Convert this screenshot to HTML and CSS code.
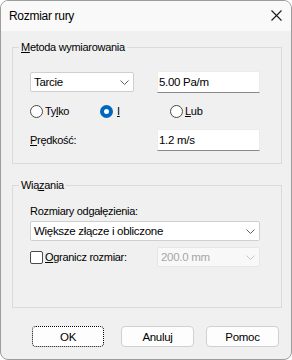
FILE: index.html
```html
<!DOCTYPE html>
<html lang="pl">

    <head>
        <meta charset="UTF-8">
        <meta name="viewport" content="width=device-width, initial-scale=1.0">
        <title>Rozmiar rury</title>

        <link rel="stylesheet" href="styles.css">
    </head>

    <body>

        <div class="window">
            <div class="titlebar">
                <span class="title">Rozmiar rury</span>
                <svg class="close" width="11" height="11" viewBox="0 0 11 11">
                    <path d="M0.5 0.5 L10.5 10.5 M10.5 0.5 L0.5 10.5" stroke="#1a1a1a" stroke-width="1.1" fill="none"/>
                </svg>
            </div>

            <div class="content">
                <fieldset class="group group-method">
                    <legend><u>M</u>etoda wymiarowania</legend>
                    <div class="group-body">
                        <div class="row row-top">
                            <div class="combo combo-short">
                                <span>Tarcie</span>
                                <svg class="chevron" width="9" height="5" viewBox="0 0 9 5">
                                    <path d="M0.5 0.5 L4.5 4.5 L8.5 0.5" stroke="#606060" fill="none"/>
                                </svg>
                            </div>
                            <div class="field">5.00 Pa/m</div>
                        </div>

                        <div class="radios">
                            <div class="radio"><span class="circle"></span><span>Ty<u>l</u>ko</span></div>
                            <div class="radio checked"><span class="circle"></span><span><u>I</u></span></div>
                            <div class="radio"><span class="circle"></span><span><u>L</u>ub</span></div>
                        </div>

                        <div class="row row-speed">
                            <span class="label"><u>P</u>rędkość:</span>
                            <div class="field">1.2 m/s</div>
                        </div>
                    </div>
                </fieldset>

                <fieldset class="group group-bind">
                    <legend>Wią<u>z</u>ania</legend>
                    <div class="group-body">
                        <div class="label branch-label">Rozmiary odgałęzienia:</div>
                        <div class="combo combo-wide">
                            <span>Większe złącze i obliczone</span>
                            <svg class="chevron" width="9" height="5" viewBox="0 0 9 5">
                                <path d="M0.5 0.5 L4.5 4.5 L8.5 0.5" stroke="#606060" fill="none"/>
                            </svg>
                        </div>
                        <div class="row row-limit">
                            <div class="check"><span class="box"></span><span><u>O</u>granicz rozmiar:</span></div>
                            <div class="combo combo-disabled">
                                <span>200.0 mm</span>
                                <svg class="chevron" width="9" height="5" viewBox="0 0 9 5">
                                    <path d="M0.5 0.5 L4.5 4.5 L8.5 0.5" stroke="#c4c4c4" fill="none"/>
                                </svg>
                            </div>
                        </div>
                    </div>
                </fieldset>

                <div class="buttons">
                    <button class="btn btn-ok">OK</button>
                    <button class="btn">Anuluj</button>
                    <button class="btn">Pomoc</button>
                </div>
            </div>
        </div>

    </body>

</html>
```

FILE: styles.css
```css
body {
    margin: 0;
    padding: 0;
    font-family: "Liberation Sans", Arial, sans-serif;
    font-size: 11px;
    letter-spacing: -0.3px;
    color: #000;
    background-color: #fff;
}

.window {
    width: 292px;
    height: 360px;
    box-sizing: border-box;
    border: 1px solid #9c9c9c;
    border-radius: 8px;
    background-color: #f0f0f0;
    overflow: hidden;
}

.titlebar {
    height: 30px;
    background-color: #f9f9f9;
    display: flex;
    align-items: center;
    justify-content: space-between;
    padding: 0 9px 0 8px;
}

.title {
    font-size: 12px;
}

.close {
    margin-top: -1px;
}

.content {
    padding: 10px 0 0 11px;
}

u {
    text-decoration-thickness: 1px;
    text-underline-offset: 1px;
}

/* group boxes */

.group {
    width: 270px;
    box-sizing: border-box;
    margin: 0;
    padding: 0 0 0 6px;
    border: 1px solid #dadada;
    min-width: 0;
}

.group legend {
    padding: 0 2px;
    line-height: 13px;
}

.group-body {
    padding-left: 11px;
}

.group-method .group-body {
    padding-top: 17px;
    padding-bottom: 12px;
}

.group-bind {
    margin-top: 15px;
}

.group-bind .group-body {
    padding-top: 13px;
    padding-bottom: 40px;
}

.row {
    display: grid;
    grid-template-columns: 127px 103px;
    align-items: center;
}

.row-top {
    height: 22px;
}

.row-speed {
    height: 22px;
    margin-top: 11px;
}

.label {
    line-height: 13px;
}

/* inputs */

.field {
    height: 22px;
    box-sizing: border-box;
    background-color: #fff;
    border: 1px solid #ececec;
    border-bottom-color: #8a8a8a;
    padding-left: 1px;
    display: flex;
    align-items: center;
    font-size: 11.5px;
}

.combo {
    height: 20px;
    box-sizing: border-box;
    background-color: #fff;
    border: 1px solid #cfcfcf;
    border-radius: 2px;
    display: flex;
    align-items: center;
    justify-content: space-between;
    padding: 0 4px 0 3px;
    font-size: 11.5px;
}

.combo-short {
    width: 104px;
}

.combo-wide {
    width: 230px;
    margin-top: 3px;
}

.combo-disabled {
    background-color: #f8f8f8;
    border-color: #e6e6e6;
    color: #a6a6a6;
}

/* radios and checkbox */

.radios {
    display: grid;
    grid-template-columns: 70px 70px auto;
    height: 14px;
    margin-top: 11px;
    align-items: center;
}

.radio,
.check {
    display: flex;
    align-items: center;
    gap: 2px;
}

.circle {
    width: 13px;
    height: 13px;
    box-sizing: border-box;
    border: 1px solid #4a4a4a;
    border-radius: 50%;
    background-color: #fff;
}

.checked .circle {
    border: 4px solid #0067c0;
    background-color: #fff;
}

.checked span + span {
    margin-left: 2px;
}

.row-limit {
    height: 20px;
    margin-top: 6px;
}

.box {
    width: 13px;
    height: 13px;
    box-sizing: border-box;
    border: 1px solid #4a4a4a;
    border-radius: 2px;
    background-color: #fff;
}

/* buttons */

.buttons {
    display: flex;
    gap: 12px;
    margin-top: 18px;
    padding-left: 20px;
}

.btn {
    width: 73px;
    height: 21px;
    box-sizing: border-box;
    font-family: "Liberation Sans", Arial, sans-serif;
    font-size: 11.5px;
    letter-spacing: -0.3px;
    color: #000;
    background-color: #fdfdfd;
    border: 1px solid #d0d0d0;
    border-radius: 4px;
    padding: 0;
}

.btn-ok {
    width: 72px;
    margin-right: 5px;
    border: 1px dotted #000;
}
```
